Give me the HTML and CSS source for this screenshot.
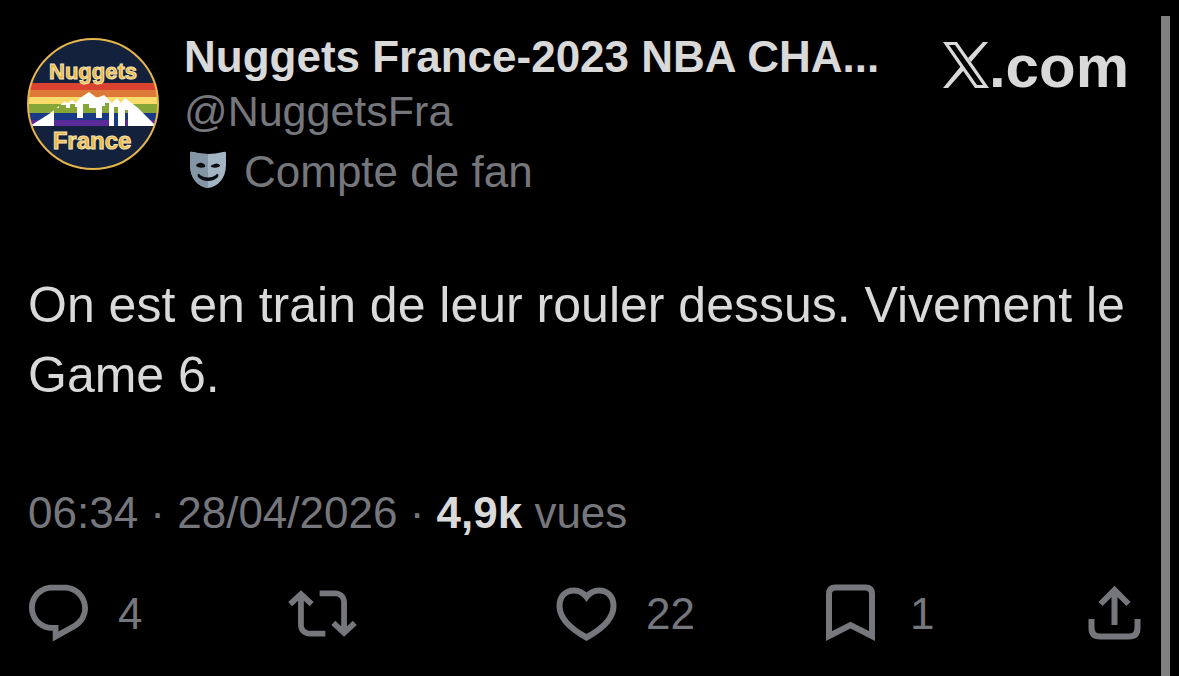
FILE: index.html
```html
<!DOCTYPE html>
<html lang="fr">
  <head>
    <meta charset="UTF-8" />
    <meta name="viewport" content="width=device-width, initial-scale=1.0" />
    <title>Nuggets France sur X</title>
    <link rel="stylesheet" href="styles.css">
  </head>
  <body>
    <article class="post">
      <header class="post-header">
        <svg class="avatar" viewBox="0 0 132 132" role="img" aria-label="Nuggets France">
          <clipPath id="badge"><circle cx="66" cy="66" r="65" /></clipPath>
          <g clip-path="url(#badge)">
            <rect width="132" height="132" fill="#14213d" />
            <rect y="45" width="132" height="8" fill="#d9432f" />
            <rect y="52" width="132" height="8" fill="#dd7a38" />
            <rect y="59" width="132" height="8" fill="#fbdc6a" />
            <rect y="66" width="132" height="9" fill="#86a637" />
            <rect y="75" width="132" height="7" fill="#1b3a86" />
            <rect y="82" width="132" height="6" fill="#5c2b9a" />
            <!-- mountains -->
            <path fill="#fff" d="M3 88 22 76l15-12 4 1 4-3 4 3 4-5 9-6 8 6 7-3 8 8 5-5 4 5 4-5 13 10 18 18z" />
            <!-- skyline -->
            <path fill="#86a637" d="M27 75v-5h5v-3h7v3h4v-4h5v3h2v6zM56 75v-9h6v4h7v5zM75 75v-7h3v-3h4v10zM87 75v-6h4v6zM98 75v-3h3v3z" />
            <path fill="#1b3a86" d="M27 75h23v5h6v-5h13v5h6v-5h7v7H27zM87 75h4v13h-4zM98 75h3v7h-3z" />
            <path fill="#5c2b9a" d="M27 82h55v6H27zM98 82h3v6h-3z" />
          </g>
          <circle cx="66" cy="66" r="65" fill="none" stroke="#e5b64b" stroke-width="2" />
          <text class="badge-text badge-top" x="66" y="41">Nuggets</text>
          <text class="badge-text badge-bottom" x="65" y="111">France</text>
        </svg>

        <div class="author">
          <h1 class="name">Nuggets France-2023 NBA CHA...</h1>
          <a class="handle" href="#">@NuggetsFra</a>
          <p class="label">
            <svg class="mask" viewBox="0 0 36 38" aria-hidden="true">
              <path fill="#a3b4c2" d="M0 2q0-2 3-1 15 4 30 0 3-1 3 1v12c0 13-8 22-18 23C8 36 0 27 0 14z" />
              <path fill="#8496a5" d="M18 3Q10 3 3 1 0 0 0 2v12c0 13 8 22 18 23z" />
              <path fill="#0b0d10" d="M6 14q4-4 8-1 2 1 1 3-5 2-9-1zM30 14q-3-3-8 0-2 1-1 2 6 2 9-1zM8 23q1-1 2 1 8 5 16 0 1-2 2-1 1 1 0 3-4 4-10 4T8 26q-1-2 0-3z" />
            </svg>
            Compte de fan
          </p>
        </div>

        <a class="brand" href="#" aria-label="X.com">
          <svg class="brand-x" viewBox="0 0 46 46" aria-hidden="true">
            <path fill-rule="evenodd" d="M0 0h14l32 46H32zM6 3l28 40h6L12 3z" />
            <path d="M40 0h5L28 20l-3-4zM0 46h5l16-18-3-4z" />
          </svg>
          <span>.com</span>
        </a>
      </header>

      <p class="content">On est en train de leur rouler dessus. Vivement le Game 6.</p>

      <p class="meta">06:34 · 28/04/2026 · <strong>4,9k</strong> vues</p>

      <footer class="actions">
        <button type="button" class="action" aria-label="Répondre">
          <svg class="icon" viewBox="0 0 24 24"><path d="M1.751 10c0-4.42 3.584-8 8.005-8h4.366c4.49 0 8.129 3.64 8.129 8.13 0 2.96-1.607 5.68-4.196 7.11l-8.054 4.46v-3.69h-.067c-4.49.1-8.183-3.51-8.183-8.01zm8.005-6c-3.317 0-6.005 2.69-6.005 6 0 3.37 2.77 6.08 6.138 6.01l.351-.01h1.761v2.3l5.087-2.81c1.951-1.08 3.163-3.13 3.163-5.36 0-3.39-2.744-6.13-6.129-6.13H9.756z" /></svg>
          <span>4</span>
        </button>
        <button type="button" class="action" aria-label="Reposter">
          <svg class="icon" viewBox="0 0 24 24"><path d="M4.5 3.88l4.432 4.14-1.364 1.46L5.5 7.55V16c0 1.1.896 2 2 2H13v2H7.5c-2.209 0-4-1.79-4-4V7.55L1.432 9.48.068 8.02 4.5 3.88zM16.5 6H11V4h5.5c2.209 0 4 1.79 4 4v8.45l2.068-1.93 1.364 1.46-4.432 4.14-4.432-4.14 1.364-1.46 2.068 1.93V8c0-1.1-.896-2-2-2z" /></svg>
        </button>
        <button type="button" class="action" aria-label="J'aime">
          <svg class="icon line" viewBox="0 0 69 69"><path d="M34.500 18C31 13.500 26.500 11.500 22 11.500 13.500 11.500 7.500 17.500 7.500 27 7.500 39 19 50 34.500 58.500 50 50 61.500 39 61.500 27 61.500 17.500 55.500 11.500 47 11.500 42.500 11.500 38 13.500 34.500 18z" /></svg>
          <span>22</span>
        </button>
        <button type="button" class="action" aria-label="Ajouter aux signets">
          <svg class="icon line" viewBox="0 0 69 69"><path d="M13 57V15q0-6.500 6.500-6.500h30q6.500 0 6.500 6.500V57L34.500 46z" /></svg>
          <span>1</span>
        </button>
        <button type="button" class="action" aria-label="Partager">
          <svg class="icon line" viewBox="0 0 69 69"><path d="M11.500 40v9q0 8.500 8.500 8.500h29q8.500 0 8.500-8.500V40M34.500 46V12M20.500 25l14-14 14 14" /></svg>
        </button>
      </footer>
    </article>
  </body>
</html>
```
FILE: styles.css
```css
* {
  box-sizing: border-box;
}

body {
  margin: 0;
  background-color: #000;
  color: #d9d9d9;
  font-family: "Liberation Sans", Arial, sans-serif;
  font-size: 44px;
  line-height: 54px;
}

h1,
p {
  margin: 0;
}

a {
  color: inherit;
  text-decoration: none;
}

.post {
  min-height: calc(100vh - 16px);
  margin: 16px 9px 0 0;
  padding: 14px 12px 0 28px;
  border-right: 9px solid #808080;
}

.post-header {
  display: flex;
  align-items: flex-start;
}

.avatar {
  flex: none;
  width: 132px;
  height: 132px;
  margin: 8px 25px 0 -1px;
}

.badge-text {
  fill: #eeb43c;
  stroke: #f7e6b5;
  stroke-width: 1px;
  font-weight: bold;
  text-anchor: middle;
}

.badge-top {
  font-size: 22px;
}

.badge-bottom {
  font-size: 24px;
}

.author {
  flex: 1;
  min-width: 0;
}

.name {
  overflow: hidden;
  font-size: 44px;
  font-weight: bold;
  text-overflow: ellipsis;
  white-space: nowrap;
}

.handle {
  display: block;
  color: #75777c;
  font-size: 43px;
}

.label {
  display: flex;
  align-items: flex-start;
  gap: 18px;
  margin-top: 7px;
  padding-left: 6px;
  color: #75777c;
}

.mask {
  width: 36px;
  height: 38px;
  margin-top: 6px;
}

.brand {
  display: flex;
  align-items: flex-start;
  margin: 12px 20px 0 0;
  font-size: 60px;
  font-weight: bold;
  line-height: 50px;
}

.brand-x {
  width: 46px;
  height: 46px;
  fill: currentColor;
}

.content {
  margin-top: 71px;
  font-size: 50px;
  line-height: 70px;
}

.meta {
  margin-top: 76px;
  color: #75777c;
}

.meta strong {
  color: #d9d9d9;
}

.actions {
  display: grid;
  grid-template-columns: repeat(4, 1fr) auto;
  margin: 39px 0 0 -4px;
}

.action {
  display: flex;
  align-items: center;
  gap: 25px;
  padding: 0;
  border: none;
  background: none;
  color: #75777c;
  font: inherit;
  cursor: pointer;
}

.icon {
  width: 69px;
  height: 69px;
  fill: currentColor;
}

.line {
  fill: none;
  stroke: currentColor;
  stroke-width: 6;
}
```
